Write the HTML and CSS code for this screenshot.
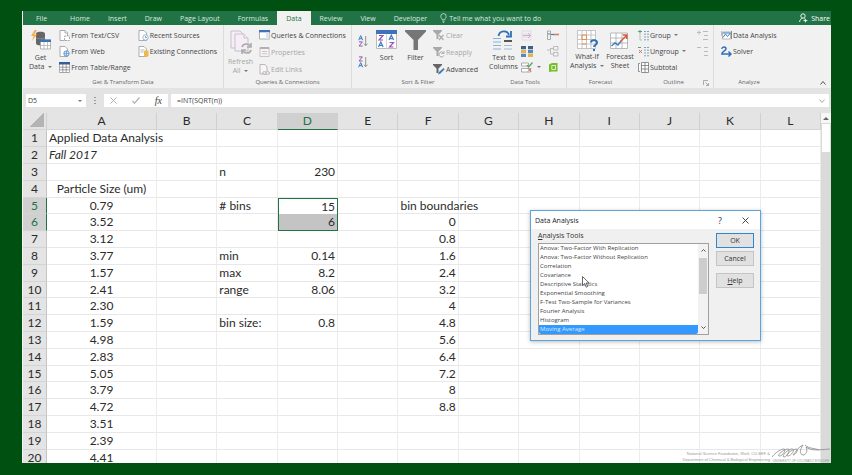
FILE: index.html
```html
<!DOCTYPE html>
<html lang="en">
<head>
  <meta charset="UTF-8">
  <title>Applied Data Analysis</title>
  <link rel="stylesheet" href="styles.css">
</head>
<body>
<div class="window">

  <!-- Tabs -->
  <nav class="tabs">
    <button class="tab file">File</button>
    <button class="tab">Home</button>
    <button class="tab">Insert</button>
    <button class="tab">Draw</button>
    <button class="tab">Page Layout</button>
    <button class="tab">Formulas</button>
    <button class="tab active">Data</button>
    <button class="tab">Review</button>
    <button class="tab">View</button>
    <button class="tab">Developer</button>
    <button class="tell">
      <svg width="7" height="10" viewBox="0 0 7 10" fill="none" stroke="#cfe3d7" stroke-width=".8"><path d="M2.2 6.8C2.2 5.4.8 5 .8 3.3a2.7 2.7 0 0 1 5.4 0C6.2 5 4.8 5.4 4.8 6.8zM2.4 8.2h2.2M2.8 9.4h1.4"/></svg>
      Tell me what you want to do
    </button>
    <button class="share">
      <svg width="9" height="10" viewBox="0 0 9 10" fill="none" stroke="#fff" stroke-width=".9"><circle cx="4" cy="3" r="2.2"/><path d="M.6 9c.2-2.4 1.4-3.6 3-3.7M5.2 5.6l.8.4M4.4 7.6h4M6.4 5.8v3.6"/></svg>
      Share
    </button>
  </nav>

  <!-- Ribbon -->
  <div class="ribbon">
    <section class="group get">
      <div class="tools">
        <button class="big">
          <svg width="20" height="20" viewBox="0 0 20 20"><path d="M5 3.500c0-2.500 9-2.500 9 0v10c0 2.500-9 2.500-9 0z" fill="#666"/><path d="M5 7.500c1 1.600 8 1.600 9 0" stroke="#888" fill="none"/><path d="M3.500 0 0 6h2.500L1 11l5-6.500H3.500L6 0z" fill="#f2b25c"/><path d="M9.500 10h10v9h-10z" fill="#fff" stroke="#999" stroke-width=".7"/><path d="M9 9.500h11v2.500H9z" fill="#3c73b9"/><path d="M9.500 15.500h10M13 12v7M16.500 12v7" stroke="#aaa" stroke-width=".7"/></svg>
          <span>Get<br>Data <i class="caret"></i></span>
        </button>
        <div class="stack">
          <button class="small"><svg width="11" height="11" viewBox="0 0 11 11" fill="#fff" stroke="#999" stroke-width=".8"><path d="M1 .5h5L8.500 3v7.500H1z"/><path d="M6 .5V3h2.500"/><path d="M5.500 6h5v4.500h-5z" stroke-dasharray="2 1"/></svg>From Text/CSV</button>
          <button class="small"><svg width="11" height="11" viewBox="0 0 11 11" fill="#fff" stroke="#999" stroke-width=".8"><path d="M1 .5h5L8.500 3v7.500H1z"/><circle cx="7.500" cy="7.500" r="2.700" fill="#dcecfa" stroke="#3f83c7"/><path d="M5 7.500h5M7.500 5v5" stroke="#3f83c7" stroke-width=".6"/></svg>From Web</button>
          <button class="small"><svg width="11" height="11" viewBox="0 0 11 11"><path d="M.4.500h10.200v10H.4z" fill="#fff" stroke="#888" stroke-width=".7"/><path d="M0 0h11v2.500H0z" fill="#2f5f9f"/><path d="M.5 5.200h10M.5 7.800h10M3.800 2v8.500M7.200 2v8.500" stroke="#777" stroke-width=".7"/></svg>From Table/Range</button>
        </div>
        <div class="stack">
          <button class="small"><svg width="11" height="11" viewBox="0 0 11 11" fill="#fff" stroke="#999" stroke-width=".8"><path d="M1 .5h5L8.500 3v7.500H1z"/><circle cx="7.500" cy="7.500" r="2.700" stroke="#7ba6cc"/><path d="M7.500 6v1.700H9" stroke="#5b8dbd"/></svg>Recent Sources</button>
          <button class="small"><svg width="11" height="11" viewBox="0 0 11 11"><path d="M1 .500h5L8.500 3v7.500H1z" fill="#fff" stroke="#999" stroke-width=".8"/><path d="M2.500 4h4M2.500 6h3" stroke="#999" stroke-width=".7"/><path d="M6 5.500c0-1.300 4.500-1.300 4.500 0v4.300c0 1.300-4.500 1.300-4.500 0z" fill="#efb84e"/></svg>Existing Connections</button>
        </div>
      </div>
      <h2>Get &amp; Transform Data</h2>
    </section>

    <section class="group queries">
      <div class="tools">
        <button class="big off">
          <svg width="22" height="24" viewBox="0 0 22 24" fill="#f6eef6" stroke="#c9bfca"><path d="M1 1h9l3 3v14H1z"/><path d="M5 4h9l4 4v13H5z"/><path d="M14 4v4h4"/><g fill="none" stroke="#aaa" stroke-width="1.600"><path d="M12 17c1-4 7-4 8.500-.5M21 20c-1 4-7 4-8.500.500"/><path d="M21 13v4h-4M12 24v-4h4"/></g></svg>
          <span>Refresh<br>All <i class="caret"></i></span>
        </button>
        <div class="stack">
          <button class="small"><svg width="11" height="10" viewBox="0 0 11 10"><path d="M.5.500h10v8.500H.5z" fill="#fff" stroke="#999" stroke-width=".8"/><path d="M0 0h11v2.300H0z" fill="#3f73b5"/><path d="M7 2.500h3.500V9H7z" fill="#d7e5f4"/></svg>Queries &amp; Connections</button>
          <button class="small off"><svg width="11" height="10" viewBox="0 0 11 10"><path d="M1 .500h9v9H1z" fill="#f7f2f6" stroke="#bbb" stroke-width=".8"/><path d="M1 0h9v2H1z" fill="#b5aeb5"/><path d="M3 4.500h5M3 6.800h5" stroke="#bbb" stroke-width=".8"/></svg>Properties</button>
          <button class="small off"><svg width="11" height="11" viewBox="0 0 11 11" fill="#f8f4f8" stroke="#aaa" stroke-width=".8"><path d="M1 .5h5L8 3v7H1z"/><ellipse cx="5.500" cy="9" rx="2" ry="1.300"/><ellipse cx="8.700" cy="9" rx="2" ry="1.300"/></svg>Edit Links</button>
        </div>
      </div>
      <h2>Queries &amp; Connections</h2>
    </section>

    <section class="group sort">
      <div class="tools">
        <div class="stack az">
          <button class="small" aria-label="Sort A to Z"><svg width="10" height="12" viewBox="0 0 10 12" fill="none"><path d="M.7 5.200 2.700.6l2 4.600M1.400 3.700h2.600" stroke="#3b7dc4"/><path d="M1 6.900h3.400L1 11h3.600" stroke="#9a53b0"/><path d="M7.700 1v9.500M6 8.700l1.700 2 1.700-2" stroke="#777" stroke-width=".8"/></svg></button>
          <button class="small" aria-label="Sort Z to A"><svg width="10" height="12" viewBox="0 0 10 12" fill="none"><path d="M1 .9h3.400L1 5h3.600" stroke="#9a53b0"/><path d="M.7 11.200 2.700 6.600l2 4.600M1.400 9.700h2.600" stroke="#3b7dc4"/><path d="M7.700 1v9.500M6 8.700l1.700 2 1.700-2" stroke="#777" stroke-width=".8"/></svg></button>
        </div>
        <button class="big">
          <svg width="21" height="20" viewBox="0 0 21 20" fill="none"><path d="M.5.500h20v18H.5z" fill="#fff" stroke="#bbb"/><path d="M0 0h21v4H0z" fill="#3c73b9"/><path d="M10.500 4v15" stroke="#ccc" stroke-width=".8"/><g stroke-width="1.200"><path d="M3 5.500h4L3 10h4M13.500 12.500h4l-4 4.500h4" stroke="#9a53b0"/><path d="m2.500 17 2.300-5 2.300 5M3.300 15.500h3M13 10l2.300-4.800L17.600 10M13.800 8.600h3" stroke="#3b7dc4"/></g></svg>
          <span>Sort</span>
        </button>
        <button class="big">
          <svg width="21" height="20" viewBox="0 0 21 20"><path d="M0 0h21v1.500L13 10v10H8.500V10L0 1.500z" fill="#767676"/></svg>
          <span>Filter</span>
        </button>
        <div class="stack filters">
          <button class="small off"><svg width="12" height="11" viewBox="0 0 12 11"><path d="M0 0h9v1L5.500 4.500V9h-2V4.500L0 1z" fill="#a9a9a9"/><path d="m6 5 4.500 5M10.500 5 6 10" stroke="#aaa" stroke-width="1.200"/></svg>Clear</button>
          <button class="small off"><svg width="12" height="11" viewBox="0 0 12 11"><path d="M0 0h9v1L5.500 4.500V9h-2V4.500L0 1z" fill="#a9a9a9"/><path d="M10.500 6a2.500 2.500 0 1 0 .3 2.500M11 4v2.500H8.500" fill="none" stroke="#aaa"/></svg>Reapply</button>
          <button class="small"><svg width="12" height="11" viewBox="0 0 12 11"><path d="M0 0h9v1L5.500 4.500V9h-2V4.500L0 1z" fill="#666"/><path d="m5 10.500 1-2.500 4.500-4 1.200 1.300L7.200 9.700z" fill="#3b7dc4"/></svg>Advanced</button>
        </div>
      </div>
      <h2>Sort &amp; Filter</h2>
    </section>

    <section class="group data">
      <div class="tools">
        <button class="big">
          <svg width="20" height="20" viewBox="0 0 20 20" fill="none"><path d="M5.500 6c1-6 9-6 10.500-1M18 1v5.500h-5" stroke="#2f70b7" stroke-width="1.800"/><path d="M0 8.500h8M0 12h8M0 15.500h8M0 19h8" stroke="#8bb4dc" stroke-width="1.200"/><path d="M11 11h8" stroke="#555" stroke-width="2"/><path d="M11 15.500h8M11 19h8" stroke="#9dbddc" stroke-width="1.200"/></svg>
          <span>Text to<br>Columns</span>
        </button>
        <div class="icons">
          <button class="small" aria-label="Flash Fill"><svg width="12" height="11" viewBox="0 0 12 11" fill="none"><path d="M1 1h9v9H1zM1 4h9M1 7h9" stroke="#e3dae2"/><path d="M2 5.500h7M7 3l2.500 2.500L7 8" stroke="#d5a9cb"/></svg></button>
          <button class="small" aria-label="Consolidate"><svg width="12" height="11" viewBox="0 0 12 11" fill="none" stroke="#999" stroke-width=".8"><path d="M.5 1h3v3h-3zM.5 4h3v5.500h-3z"/><path d="M4 4.500h3" stroke="#3b7dc4" stroke-width="1.200"/><path d="M7 4.500h5" stroke="#d6805f" stroke-width="1.600"/></svg></button>
          <button class="small" aria-label="Remove Duplicates"><svg width="12" height="11" viewBox="0 0 12 11"><path d="M0 0h5v3.200H0zM7 0h5v3.200H7z" fill="#3f5f85"/><path d="M0 4h5v3H0zM7 7.500h5V11H7z" fill="#e0b44e"/><path d="M0 7.700h5V11H0zM7 4h5v3H7z" fill="#5689bd"/></svg></button>
          <button class="small" aria-label="Relationships"><svg width="12" height="11" viewBox="0 0 12 11" fill="none" stroke="#bbb"><path d="M6.500.5H11v3.500H6.500zM6.500 6.500H11V10H6.500zM0 4h3.500M3.500 2v6M3.500 2.500h3M3.500 8h3"/></svg></button>
          <button class="small" aria-label="Data Validation"><svg width="12" height="11" viewBox="0 0 12 11" fill="none"><path d="M.5 1h7v3h-7zM.5 6.500h9V10h-9z" fill="#fff" stroke="#999" stroke-width=".8"/><path d="m6 3 1.500 2L11.500.500" stroke="#4ca260" stroke-width="1.200"/><path d="m7 6.500 3 3M10 6.500l-3 3" stroke="#d05a4c"/></svg><i class="caret"></i></button>
          <button class="small" aria-label="Manage Data Model"><svg width="12" height="11" viewBox="0 0 12 11"><path d="M2 2.500 5 1h5.500v8.500H5L2 10z" fill="#76bd2b"/><path d="M4.800 3.500h3.700v4H4.800z" fill="none" stroke="#dff0c9"/></svg></button>
        </div>
      </div>
      <h2>Data Tools</h2>
    </section>

    <section class="group forecast">
      <div class="tools">
        <button class="big">
          <svg width="21" height="21" viewBox="0 0 21 21" fill="none"><path d="M.5.500h18v18H.5z" fill="#fff"/><path d="M.5.500h18v18H.5zM.5 5h18M.5 9.500h18M.5 14h18M5 .500v18M9.500.500v18M14 .500v18" stroke="#b8b8b8" stroke-width=".8"/><path d="M5 5h4.500v4.500H5zM5 14h4.500" stroke="#e98b4b"/><path d="M14 12.500c.3-3 6-3 6 .2 0 2.300-3 2-3 4.300M17 19v2" stroke="#2f70b7" stroke-width="2"/></svg>
          <span>What-If<br>Analysis <i class="caret"></i></span>
        </button>
        <button class="big">
          <svg width="19" height="21" viewBox="0 -2 19 21" fill="none"><path d="M.5 1h17v15.500H.5zM.5 6h17M.5 11h17M6 1v15.500M12 1v15.500" fill="#fff" stroke="#aaa" stroke-width=".8"/><path d="m1.500 14 3.500-3 3 2 3-4" stroke="#3b7dc4" stroke-width="1.400"/><path d="m10.500 9.500 6-6M12.800 3h4v4" stroke="#d65c3c" stroke-width="1.500"/></svg>
          <span>Forecast<br>Sheet</span>
        </button>
      </div>
      <h2>Forecast</h2>
    </section>

    <section class="group outline">
      <div class="tools">
        <div class="stack">
          <button class="small"><svg width="11" height="11" viewBox="0 0 11 11" fill="none"><path d="M2 4v6M2 10h2" stroke="#bbb"/><path d="M0 1.500h4M2 0v3.500" stroke="#58a06d"/><path d="M6 1.500h5M6 4.200h5M6 7h5M6 9.800h5" stroke="#7ca3c5" stroke-dasharray="2 1"/></svg>Group <i class="caret"></i></button>
          <button class="small"><svg width="11" height="11" viewBox="0 0 11 11" fill="none"><path d="M0 1.500h3" stroke="#58a06d"/><path d="m1 4 3 3M4 4 1 7" stroke="#d66f5c"/><path d="M6 1.500h5M6 4.200h5M6 7h5M6 9.800h5" stroke="#7ca3c5" stroke-dasharray="2 1"/></svg>Ungroup <i class="caret"></i></button>
          <button class="small"><svg width="11" height="11" viewBox="0 0 11 11" fill="#fff" stroke="#777" stroke-width=".8"><path d="M3.500.5h7v10h-7zM3.500 3.500h7M3.500 7h7M7 .5v10M2 1.500H.5v8H2"/></svg>Subtotal</button>
        </div>
        <div class="stack detail">
          <button class="small" aria-label="Show Detail"><svg width="11" height="11" viewBox="0 0 11 11" fill="none" stroke="#bbb"><path d="M0 2.500h4M2 .5v4M6 1.500h5M7 5.500h4M6 9.500h5"/></svg></button>
          <button class="small" aria-label="Hide Detail"><svg width="11" height="11" viewBox="0 0 11 11" fill="none" stroke="#bbb"><path d="M0 1.500h4M7 1.500h4M7 5.500h4M7 9.500h4"/></svg></button>
        </div>
      </div>
      <h2>Outline <svg class="launcher" width="6" height="6" viewBox="0 0 6 6" fill="none" stroke="#999" stroke-width=".8"><path d="M.5 5V.5H5M2.500 2.500l3 3M5.500 3v2.500H3"/></svg></h2>
    </section>

    <section class="group analyze">
      <div class="tools">
        <div class="stack">
          <button class="small"><svg width="11" height="11" viewBox="0 0 11 11" fill="none"><path d="M1.500 2h8v7h-8z" fill="#fff" stroke="#aaa" stroke-width=".8"/><path d="M0 1v5M10.500 1v8" stroke="#888"/><path d="M2 7.500 4.500 4l2 2.500L9.500 3" stroke="#3b7dc4"/><path d="M2 3h7" stroke="#3b7dc4"/></svg>Data Analysis</button>
          <button class="small"><svg width="11" height="11" viewBox="0 0 11 11" fill="none" stroke="#2f70b7" stroke-width="1.500"><path d="M.8 2.800C1.200.2 5 .3 5 2.800 5 5 .8 5.500.8 8h9M7.500 5.500 10 8l-2.500 2.500"/></svg>Solver</button>
        </div>
      </div>
      <h2>Analyze</h2>
    </section>
    <button class="collapse" aria-label="Collapse the Ribbon"><svg width="6" height="4" viewBox="0 0 6 4" fill="none" stroke="#555"><path d="m.5 3.500 2.500-3 2.500 3"/></svg></button>
  </div>

  <!-- Formula bar -->
  <div class="formula-bar">
    <div class="name-box"><input type="text" value="D5" aria-label="Name Box"><i class="caret"></i></div>
    <span class="dots"></span>
    <div class="entry">
      <button aria-label="Cancel entry"><svg width="7" height="7" viewBox="0 0 7 7" stroke="#b0b0b0"><path d="m.5.500 6 6M6.500.500l-6 6"/></svg></button>
      <button aria-label="Enter"><svg width="8" height="7" viewBox="0 0 8 7" fill="none" stroke="#b0b0b0" stroke-width="1.200"><path d="m.5 4 2 2.200L7.500.500"/></svg></button>
      <button class="fx">fx</button>
    </div>
    <div class="formula">
      <input type="text" value="=INT(SQRT(n))" aria-label="Formula">
      <svg width="6" height="4" viewBox="0 0 6 4" fill="none" stroke="#aaa"><path d="m.5.500 2.500 3 2.500-3"/></svg>
    </div>
  </div>

  <!-- Worksheet -->
  <div class="sheet">
    <div class="pane">
      <table class="grid">
        <colgroup><col class="col-num"><col class="col-a"><col span="11"></colgroup>
        <thead><tr id="letters"><th class="corner"></th></tr></thead>
        <tbody id="rows"></tbody>
      </table>
    </div>
    <div class="scroll">
      <button aria-label="Scroll up"><i class="up"></i></button>
      <span class="thumb"></span>
    </div>
    <div class="credit">
      <p>National Science Foundation, Shell, CU-EEF &amp;<br>Department of Chemical &amp; Biological Engineering</p>
      <div class="campus">
        <svg width="58" height="15" viewBox="0 0 58 15" fill="none" stroke="#888" stroke-width=".8"><path d="M0 13c4-5 9-8 12-8 3 0-2 8-5 7-2-1 5-7 9-7 3 0-1 8-4 8s3-8 8-8c4 0-1 7-4 7s2-6 8-7c3 0 0 6-3 6 3-3 5-8 10-10-3 5-4 9 0 10 3 0 5-4 3-8 5 4 12 3 24 2M33 1c4 4 10 3 14 5"/></svg>
        <small>UNIVERSITY OF COLORADO BOULDER</small>
      </div>
    </div>
  </div>

  <!-- Data Analysis dialog -->
  <div class="dialog" role="dialog" aria-labelledby="dlgTitle">
    <header>
      <h3 id="dlgTitle">Data Analysis</h3>
      <button aria-label="What's this">?</button>
      <button aria-label="Close"><svg width="7" height="7" viewBox="0 0 7 7" stroke="#333" stroke-width=".9"><path d="m.5.500 6 6M6.500.500l-6 6"/></svg></button>
    </header>
    <div class="content">
      <div class="picker">
        <label for="tools"><u>A</u>nalysis Tools</label>
        <div class="list">
          <select id="tools" size="10">
            <option>Anova: Two-Factor With Replication</option>
            <option>Anova: Two-Factor Without Replication</option>
            <option>Correlation</option>
            <option>Covariance</option>
            <option>Descriptive Statistics</option>
            <option>Exponential Smoothing</option>
            <option>F-Test Two-Sample for Variances</option>
            <option>Fourier Analysis</option>
            <option>Histogram</option>
            <option selected>Moving Average</option>
          </select>
          <div class="list-scroll">
            <svg width="5" height="3" viewBox="0 0 5 3" fill="none" stroke="#555"><path d="m.5 2.500 2-2 2 2"/></svg>
            <span></span>
            <svg width="5" height="3" viewBox="0 0 5 3" fill="none" stroke="#555"><path d="m.5.500 2 2 2-2"/></svg>
          </div>
        </div>
      </div>
      <div class="actions">
        <button class="ok">OK</button>
        <button>Cancel</button>
        <button class="help"><u>H</u>elp</button>
      </div>
    </div>
    <svg class="pointer" width="8" height="12" viewBox="0 0 8 12"><path d="M.5.500v9l2.200-2 1.500 3.700 1.500-.7L4.200 7h3z" fill="#fff" stroke="#444" stroke-width=".8"/></svg>
  </div>
</div>

<script>
  const letters = "ABCDEFGHIJKL".split("");
  const sizes = [0.79, 3.52, 3.12, 3.77, 1.57, 2.41, 2.30, 1.59, 4.98, 2.83, 5.05, 3.79, 4.72, 3.51, 2.39, 4.41];
  const bins = [0, 0.8, 1.6, 2.4, 3.2, 4, 4.8, 5.6, 6.4, 7.2, 8, 8.8];
  const cells = {
    A1: "Applied Data Analysis", A2: "Fall 2017", A4: "Particle Size (um)",
    C3: "n", D3: 230, C5: "# bins", D5: 15, D6: 6,
    C8: "min", D8: 0.14, C9: "max", D9: 8.2, C10: "range", D10: 8.06,
    C12: "bin size:", D12: 0.8, F5: "bin boundaries"
  };
  sizes.forEach((v, i) => cells["A" + (i + 5)] = v.toFixed(2));
  bins.forEach((v, i) => cells["F" + (i + 6)] = v);

  const head = document.getElementById("letters");
  letters.forEach(l => {
    const th = document.createElement("th");
    th.textContent = l;
    if (l === "D") th.className = "picked";
    head.appendChild(th);
  });

  const body = document.getElementById("rows");
  for (let r = 1; r <= 20; r++) {
    const tr = body.insertRow();
    const th = document.createElement("th");
    th.textContent = r;
    if (r === 5 || r === 6) th.className = "picked";
    tr.appendChild(th);
    letters.forEach(l => {
      const td = tr.insertCell();
      const v = cells[l + r];
      if (v !== undefined) td.textContent = v;
      if (typeof v === "number") td.className = "num";
      if (l === "A" && r > 3) td.className = "mid";
      if (l + r === "A2") td.className = "term";
      if (l + r === "D5") td.className = "num sel-top";
      if (l + r === "D6") td.className = "num sel-bottom";
    });
  }
</script>
</body>
</html>
```
FILE: styles.css
```css
* { box-sizing: border-box; }
body {
  margin: 0; height: 100vh; padding: 11px 21px 12px 22px; overflow: hidden;
  background: #005012; color: #444; font-family: "Open Sans", "Noto Sans", sans-serif; font-size: 7px; line-height: 9px;
}
button, input, select { font: inherit; color: inherit; margin: 0; padding: 0; border: none; background: none; outline: none; }
button { display: flex; align-items: center; white-space: nowrap; }
svg { flex: none; display: block; }
h2, h3, p { margin: 0; font-size: 7px; font-weight: normal; }

.window { position: relative; height: 100%; display: flex; flex-direction: column; overflow: hidden; background: #e3e3e3; border-left: 1px solid #f4f4f4; }

.tabs { display: flex; height: 14px; flex: none; background: #217346; color: #d9e9df; }
.tab { padding: 0 9px; }
.tab.file { padding-left: 13px; padding-right: 14px; }
.tab.active { background: #f1f1f1; color: #217346; }
.tell { gap: 2px; padding-left: 4px; }
.share { gap: 3px; margin-left: auto; padding-right: 1px; color: #fff; }

.ribbon { display: flex; flex: none; height: 63px; background: #f1f1f1; }
.group { display: flex; flex-direction: column; padding: 4px 0 1px; border-right: 1px solid #dcdcdc; }
.group h2 { margin-top: auto; text-align: center; color: #666; font-size: 6px; }
.get { width: 201px; }
.queries { width: 128px; }
.sort { width: 132px; border-right: none; }
.data { width: 83px; }
.forecast { width: 67px; border-right: none; }
.outline { width: 80px; }
.analyze { width: 70px; border-right: none; }
.tools { display: flex; }
.big { flex-direction: column; align-items: center; gap: 3px; align-self: flex-start; text-align: center; }
.big svg { margin: 1px 0 0; }
.off { color: #a6a6a6; }
.stack { display: flex; flex-direction: column; gap: 4px; }
.small { height: 12px; gap: 1px; }
.caret { display: inline-block; border: 2px solid transparent; border-top-color: #777; border-bottom: none; vertical-align: middle; margin-left: 2px; }

.get .tools { padding-left: 6px; }
.get .stack { margin-left: 7px; }
.queries .tools { padding-left: 4px; gap: 6px; }
.queries .stack, .filters { gap: 5px; }
.sort .tools { padding-left: 6px; gap: 8px; }
.sort .filters { margin-left: -1px; }
.az { gap: 9px; padding-top: 6px; }
.data .tools { padding-left: 5px; gap: 3px; }
.icons { display: grid; grid-template-columns: 26px 12px; row-gap: 4px; align-content: start; }
.icons .small { gap: 2px; }
.forecast .tools { padding-left: 3px; gap: 2px; }
.forecast .big { gap: 1px; }
.outline .tools { padding-left: 4px; justify-content: space-between; padding-right: 5px; }
.launcher { float: right; margin: 2px 4px 0 -10px; }
.analyze .tools { padding-left: 7px; }
.collapse { margin-left: auto; align-self: flex-end; padding: 0 5px 3px; }

.formula-bar { display: flex; flex: none; height: 25px; padding: 6px 2px 6px 3px; }
.formula-bar input { flex: 1; min-width: 0; height: 100%; }
.name-box { display: flex; align-items: center; width: 60px; padding: 0 4px 0 2px; background: #fff; }
.dots { width: 18px; margin: 3px 0; background: radial-gradient(circle, #999 1px, transparent 1px) center / 18px 3px repeat-y; }
.entry { display: flex; justify-content: space-between; align-items: center; width: 64px; padding: 0 6px; background: #fff; }
.fx { font-family: "Liberation Serif", serif; font-style: italic; font-size: 10px; }
.formula { flex: 1; display: flex; align-items: center; margin-left: 3px; padding: 0 4px 0 6px; background: #fff; }

.sheet { position: relative; flex: 1; min-height: 0; display: flex; align-items: flex-start; overflow: hidden; }
.pane { flex: 1; min-width: 0; }
.grid { width: 100%; table-layout: fixed; border-collapse: separate; border-spacing: 0; background: #fff; color: #2b2b2b; font: 12px/12px Lato, sans-serif; }
.col-num { width: 24px; }
.col-a { width: 110px; }
.grid th, .grid td { height: 17px; padding: 0 2px; white-space: nowrap; overflow: visible; }
.grid tbody tr:nth-child(5n) > * { height: 16px; }
.grid th { font-weight: normal; background: #e4e4e4; text-align: center; border-bottom: 1px solid #d4d4d4; }
.grid thead th { border-right: 1px solid #d0d0d0; }
.grid tbody th { border-right: 1px solid #c4c4c4; }
.grid td { border-right: 1px solid #ececec; border-bottom: 1px solid #e8e8e8; }
.grid .corner { background: linear-gradient(135deg, transparent 50%, #b4b4b4 50%) right 2px bottom 2px / 14px 14px no-repeat #e4e4e4; }
.grid .picked { background: #d0d0d0; color: #217346; }
.grid thead .picked { border-bottom: 1px solid #217346; }
.grid tbody .picked { border-right-color: #217346; }
.grid .num { text-align: right; }
.grid .mid { text-align: center; }
.grid .term { font-style: italic; }
.grid .sel-top { border: 1px solid #217346; border-bottom: none; }
.grid .sel-bottom { border: 1px solid #217346; border-top: none; background: #c4c4c4; }

.scroll { align-self: stretch; width: 10px; background: #dadada; }
.scroll button { width: 100%; height: 10px; justify-content: center; background: #f7f7f7; }
.up { border: 3px solid transparent; border-top: none; border-bottom-color: #666; }
.thumb { display: block; height: 28px; margin: 1px 1px 0; background: #fff; }

.credit { position: absolute; right: 1px; bottom: 0; display: flex; align-items: flex-end; gap: 2px; color: #999; font: 4px/6px "Liberation Sans", sans-serif; text-align: right; }
.credit p { font-size: 4px; }
.campus small { display: block; font-size: 3px; line-height: 4px; text-align: center; }

.dialog { position: absolute; left: 507px; top: 199px; width: 231px; height: 131px; background: #f0f0f0; border: 1px solid #5ba4dc; box-shadow: 0 1px 4px #0004; color: #333; }
.dialog header { display: flex; align-items: center; height: 18px; padding: 0 11px 0 4px; gap: 20px; background: #fff; }
.dialog h3 { flex: 1; color: #222; }
.dialog header button { font-size: 9px; }
.content { display: flex; gap: 7px; padding: 2px 6px 0 7px; }
.picker { flex: 1; }
.picker label { display: block; height: 12px; }
.list { display: flex; height: 92px; background: #fff; border: 1px solid #a0a0a0; }
.list select { flex: 1; min-width: 0; height: 90px; overflow: hidden; scrollbar-width: none; font-size: 6px; color: #444; }
.list option { height: 9px; min-height: 9px; padding: 0 1px; line-height: 9px; }
.list option:checked { background: linear-gradient(#3399ff, #3399ff); -webkit-text-fill-color: #d5eaff; }
.list-scroll { display: flex; flex-direction: column; align-items: center; width: 10px; padding: 5px 0; background: #f2f2f2; }
.list-scroll span { width: 8px; height: 36px; margin: 6px 0 auto; background: #cdcdcd; }
.actions { display: flex; flex-direction: column; gap: 3px; width: 38px; padding-top: 2px; }
.actions button { height: 15px; justify-content: center; background: #e1e1e1; border: 1px solid #c4c4c4; }
.actions .ok { border-color: #2f86d3; }
.actions .help { margin-top: 4px; }
.pointer { position: absolute; left: 51px; top: 65px; }
```
